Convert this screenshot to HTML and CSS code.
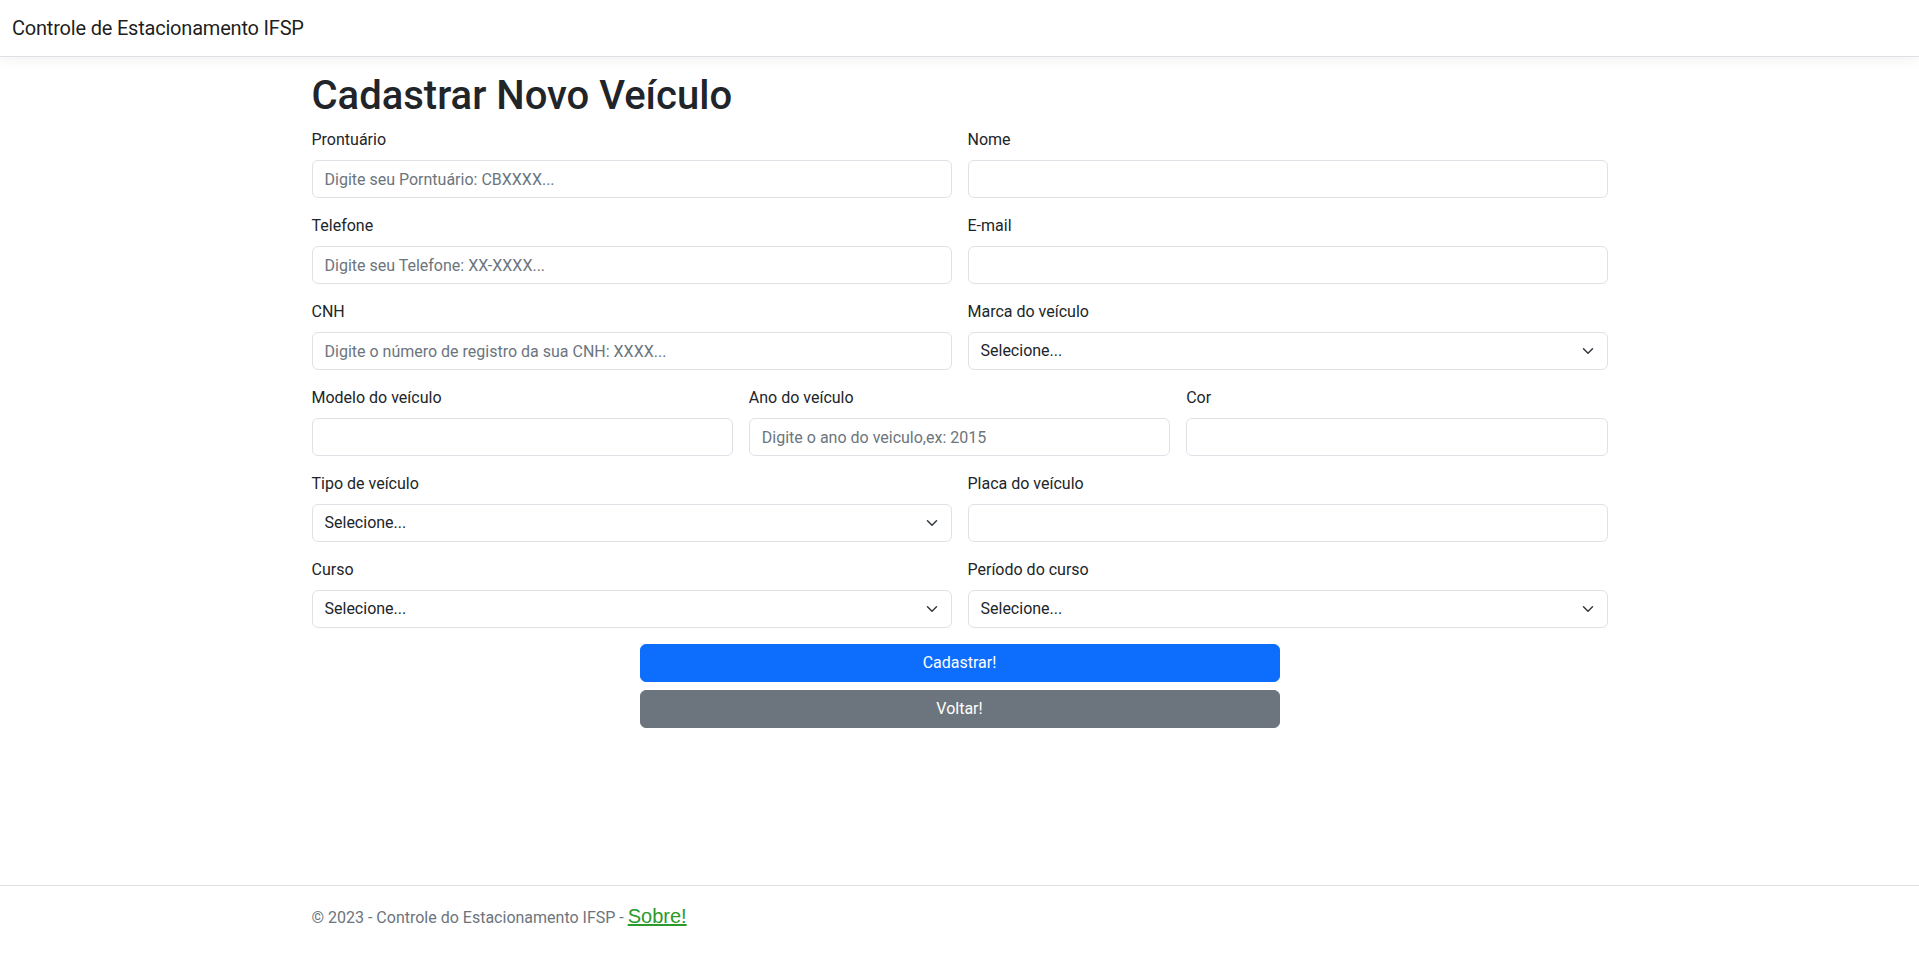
FILE: index.html
```html
<!DOCTYPE html>
<html lang="pt-br">
<head>
<meta charset="utf-8">
<title>Cadastrar Novo Veículo - Controle de Estacionamento IFSP</title>
<link rel="stylesheet" href="styles.css">
</head>
<body>
<header>
  <nav class="navbar">
    <div class="nav-inner">
      <a class="brand" href="#">Controle de Estacionamento IFSP</a>
    </div>
  </nav>
</header>
<div class="container page">
  <main class="main">
    <h1 class="title">Cadastrar Novo Veículo</h1>
    <form class="form-grid">
      <div class="field half">
        <label class="label" for="pront">Prontuário</label>
        <input class="control" id="pront" type="text" placeholder="Digite seu Porntuário: CBXXXX...">
      </div>
      <div class="field half">
        <label class="label" for="nome">Nome</label>
        <input class="control" id="nome" type="text">
      </div>
      <div class="field half">
        <label class="label" for="tel">Telefone</label>
        <input class="control" id="tel" type="text" placeholder="Digite seu Telefone: XX-XXXX...">
      </div>
      <div class="field half">
        <label class="label" for="email">E-mail</label>
        <input class="control" id="email" type="text">
      </div>
      <div class="field half">
        <label class="label" for="cnh">CNH</label>
        <input class="control" id="cnh" type="text" placeholder="Digite o número de registro da sua CNH: XXXX...">
      </div>
      <div class="field half">
        <label class="label" for="marca">Marca do veículo</label>
        <div class="select-wrap">
          <select class="control select" id="marca"><option>Selecione...</option></select>
          <svg class="chev" viewBox="0 0 16 16" width="16" height="12" preserveAspectRatio="xMidYMid meet"><path fill="none" stroke="#343a40" stroke-linecap="round" stroke-linejoin="round" stroke-width="2" d="m2 5 6 6 6-6"/></svg>
        </div>
      </div>
      <div class="field third">
        <label class="label" for="modelo">Modelo do veículo</label>
        <input class="control" id="modelo" type="text">
      </div>
      <div class="field third">
        <label class="label" for="ano">Ano do veículo</label>
        <input class="control" id="ano" type="text" placeholder="Digite o ano do veiculo,ex: 2015">
      </div>
      <div class="field third">
        <label class="label" for="cor">Cor</label>
        <input class="control" id="cor" type="text">
      </div>
      <div class="field half">
        <label class="label" for="tipo">Tipo de veículo</label>
        <div class="select-wrap">
          <select class="control select" id="tipo"><option>Selecione...</option></select>
          <svg class="chev" viewBox="0 0 16 16" width="16" height="12" preserveAspectRatio="xMidYMid meet"><path fill="none" stroke="#343a40" stroke-linecap="round" stroke-linejoin="round" stroke-width="2" d="m2 5 6 6 6-6"/></svg>
        </div>
      </div>
      <div class="field half">
        <label class="label" for="placa">Placa do veículo</label>
        <input class="control" id="placa" type="text">
      </div>
      <div class="field half">
        <label class="label" for="curso">Curso</label>
        <div class="select-wrap">
          <select class="control select" id="curso"><option>Selecione...</option></select>
          <svg class="chev" viewBox="0 0 16 16" width="16" height="12" preserveAspectRatio="xMidYMid meet"><path fill="none" stroke="#343a40" stroke-linecap="round" stroke-linejoin="round" stroke-width="2" d="m2 5 6 6 6-6"/></svg>
        </div>
      </div>
      <div class="field half">
        <label class="label" for="periodo">Período do curso</label>
        <div class="select-wrap">
          <select class="control select" id="periodo"><option>Selecione...</option></select>
          <svg class="chev" viewBox="0 0 16 16" width="16" height="12" preserveAspectRatio="xMidYMid meet"><path fill="none" stroke="#343a40" stroke-linecap="round" stroke-linejoin="round" stroke-width="2" d="m2 5 6 6 6-6"/></svg>
        </div>
      </div>
      <div class="actions">
        <button class="btn btn-primary" type="button">Cadastrar!</button>
        <button class="btn btn-secondary" type="button">Voltar!</button>
      </div>
    </form>
  </main>
</div>
<footer class="footer">
  <div class="container footer-inner">&copy; 2023 - Controle do Estacionamento IFSP - <a class="about" href="#">Sobre!</a></div>
</footer>
</body>
</html>
```
FILE: styles.css
```css
*, *::before, *::after { box-sizing: border-box; }

html, body { margin: 0; padding: 0; }

body {
  min-height: 100vh;
  display: flex;
  flex-direction: column;
  font-family: "Segoe UI", Roboto, "Liberation Sans", Arial, sans-serif;
  font-size: 16px;
  line-height: 1.5;
  color: #212529;
  background: #fff;
}

.navbar {
  padding: 8px 0;
  background: #fff;
  border-bottom: 1px solid #dee2e6;
  box-shadow: 0 4px 12px rgba(0, 0, 0, 0.05);
  margin-bottom: 15px;
}

.nav-inner {
  padding: 0 12px;
  display: flex;
  align-items: center;
}

.brand {
  padding: 5px 0;
  font-size: 20px;
  line-height: 30px;
  letter-spacing: -0.2px;
  color: rgba(0, 0, 0, 0.9);
  text-decoration: none;
  white-space: nowrap;
}

.container {
  width: 100%;
  max-width: 1320px;
  margin: 0 auto;
  padding: 0 12px;
}

.page { flex: 1 0 auto; }

.main { padding-bottom: 16px; }

.title {
  margin: 0 0 8px;
  font-size: 40px;
  font-weight: 500;
  line-height: 1.2;
  color: #212529;
}

.form-grid {
  display: grid;
  grid-template-columns: repeat(6, 1fr);
  column-gap: 16px;
  row-gap: 16px;
}

.field { display: flex; flex-direction: column; min-width: 0; }
.half { grid-column: span 3; }
.third { grid-column: span 2; }

.label {
  display: block;
  margin-bottom: 8px;
  font-size: 16px;
  line-height: 24px;
}

.control {
  display: block;
  width: 100%;
  height: 38px;
  padding: 6px 12px;
  font-family: inherit;
  font-size: 16px;
  line-height: 24px;
  color: #212529;
  background: #fff;
  border: 1px solid #dee2e6;
  border-radius: 6px;
  appearance: none;
  -webkit-appearance: none;
  outline: none;
}

.control::placeholder { color: #6c757d; opacity: 1; }

.select-wrap { position: relative; }

.select { padding-right: 36px; }

.chev {
  position: absolute;
  right: 12px;
  top: 13px;
  width: 16px;
  height: 12px;
  pointer-events: none;
}

.actions {
  grid-column: 1 / -1;
  width: 640px;
  margin: 0 auto;
  display: flex;
  flex-direction: column;
  gap: 8px;
}

.btn {
  display: block;
  width: 100%;
  padding: 6px 12px;
  font-family: inherit;
  font-size: 16px;
  line-height: 24px;
  color: #fff;
  border: 1px solid transparent;
  border-radius: 6px;
  text-align: center;
  cursor: pointer;
}

.btn-primary { background: #0d6efd; border-color: #0d6efd; }
.btn-secondary { background: #6c757d; border-color: #6c757d; }

.footer {
  border-top: 1px solid #dee2e6;
  color: #6c757d;
  white-space: nowrap;
  padding-bottom: 13px;
}

.footer-inner { line-height: 60px; }

.about {
  font-family: "Liberation Sans", Arial, sans-serif;
  font-size: 20px;
  color: #2a9a2a;
  text-decoration: underline;
}
```
